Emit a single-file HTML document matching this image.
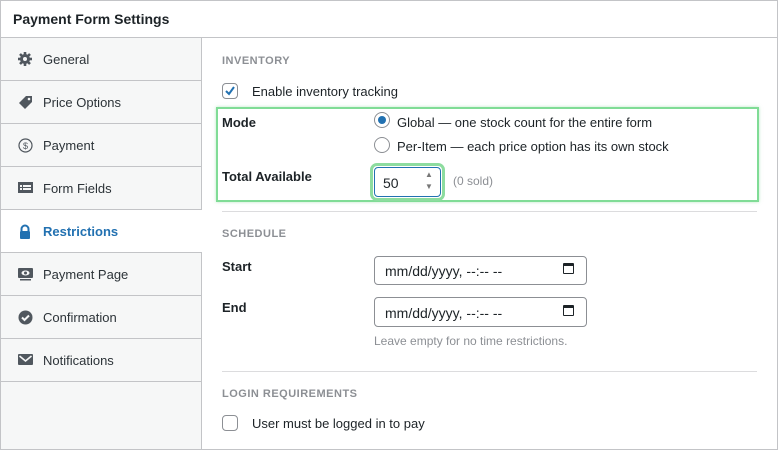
<!DOCTYPE html>
<html><head><style>
*{box-sizing:border-box;margin:0;padding:0}
body{width:778px;height:450px;background:#fff;font-family:"Liberation Sans","DejaVu Sans",sans-serif;color:#1d2327;position:relative;overflow:hidden;font-size:13px}
.a{position:absolute;white-space:nowrap}
.frame{position:absolute;left:0;top:0;width:778px;height:450px;border:1px solid #c3c4c7}
.hdr{position:absolute;left:1px;top:1px;width:776px;height:37px;border-bottom:1px solid #c3c4c7;font-weight:bold;font-size:14px;padding:10px 12px}
.side{position:absolute;left:1px;top:38px;width:201px;height:411px;background:#f6f7f7;border-right:1px solid #c3c4c7}
.it{position:absolute;left:0;width:200px;height:43px;border-bottom:1px solid #c3c4c7;font-size:13px;color:#2c3338}
.it span{position:absolute;left:42px;top:14px}
.it svg{position:absolute;left:17px;top:14px}
.act{background:#fff;width:201px;color:#2271b1;font-weight:bold}
.sec{font-size:11px;font-weight:bold;color:#8c8f94;letter-spacing:.5px}
.lbl{font-weight:bold;font-size:13px}
.cb{position:absolute;width:16px;height:16px;border:1px solid #8c8f94;border-radius:4px;background:#fff}
.rd{position:absolute;width:16px;height:16px;border:1px solid #8c8f94;border-radius:50%;background:#fff}
.inp{position:absolute;border:1px solid #8c8f94;border-radius:4px;background:#fff;font-size:14px}
.line{position:absolute;left:222px;width:535px;height:1px;background:#dcdcde}
</style></head><body>
<div class="frame"></div>
<div class="hdr">Payment Form Settings</div>
<div class="side">
<div class="it" style="top:0"><svg width="14" height="14" viewBox="0 0 14 14"><circle cx="7" cy="7" r="5" fill="#50575e"/><g stroke="#50575e" stroke-width="2.6"><line x1="7" y1="0" x2="7" y2="14"/><line x1="0" y1="7" x2="14" y2="7"/><line x1="2" y1="2" x2="12" y2="12"/><line x1="12" y1="2" x2="2" y2="12"/></g><circle cx="7" cy="7" r="2" fill="#f6f7f7"/></svg><span>General</span></div>
<div class="it" style="top:43px"><svg width="15" height="15" viewBox="0 0 15 15"><path d="M8 1h6v6l-7 7-6-6z" fill="#50575e"/><circle cx="11" cy="4" r="1.3" fill="#f6f7f7"/></svg><span>Price Options</span></div>
<div class="it" style="top:86px"><svg width="15" height="15" viewBox="0 0 15 15"><circle cx="7.5" cy="7.5" r="6.5" fill="none" stroke="#50575e" stroke-width="1.2"/><text x="7.5" y="11" font-size="9" text-anchor="middle" fill="#50575e" font-family="Liberation Sans">$</text></svg><span>Payment</span></div>
<div class="it" style="top:129px"><svg width="15" height="13" viewBox="0 0 15 13"><rect x="0" y="1" width="15" height="11" fill="#50575e"/><rect x="2" y="4" width="2" height="2" fill="#f6f7f7"/><rect x="5" y="4" width="8" height="2" fill="#f6f7f7"/><rect x="2" y="7" width="2" height="2" fill="#f6f7f7"/><rect x="5" y="7" width="8" height="2" fill="#f6f7f7"/></svg><span>Form Fields</span></div>
<div class="it act" style="top:172px"><svg width="14" height="15" viewBox="0 0 14 15"><path d="M3.5 7V5a3.5 3.5 0 0 1 7 0v2" fill="none" stroke="#2271b1" stroke-width="2"/><rect x="2" y="7" width="10" height="8" rx="1" fill="#2271b1"/></svg><span>Restrictions</span></div>
<div class="it" style="top:215px"><svg width="15" height="14" viewBox="0 0 15 14"><rect x="0" y="1" width="15" height="10" rx="1" fill="#50575e"/><ellipse cx="7.5" cy="6" rx="4" ry="2.5" fill="#f6f7f7"/><circle cx="7.5" cy="6" r="1.5" fill="#50575e"/><rect x="2" y="12" width="11" height="1.5" fill="#50575e"/></svg><span>Payment Page</span></div>
<div class="it" style="top:258px"><svg width="15" height="15" viewBox="0 0 15 15"><circle cx="7.5" cy="7.5" r="7" fill="#50575e"/><path d="M4 7.5l2.5 2.5 4.5-4.5" fill="none" stroke="#f6f7f7" stroke-width="2"/></svg><span>Confirmation</span></div>
<div class="it" style="top:301px"><svg width="15" height="13" viewBox="0 0 15 13"><rect x="0" y="1" width="15" height="11" rx="1" fill="#50575e"/><path d="M1.5 3l6 5 6-5" fill="none" stroke="#f6f7f7" stroke-width="1.6"/></svg><span>Notifications</span></div>
</div>

<div class="a sec" style="left:222px;top:55px">INVENTORY</div>
<div class="cb" style="left:222px;top:83px"><svg width="14" height="14" viewBox="0 0 14 14"><path d="M3 7l3 3 5-7" fill="none" stroke="#2271b1" stroke-width="2"/></svg></div>
<div class="a" style="left:252px;top:84px">Enable inventory tracking</div>

<div class="a" style="left:216px;top:107px;width:543px;height:95px;border:2px solid #80dc96;box-shadow:0 0 3px rgba(120,210,140,.5)"></div>
<div class="a lbl" style="left:222px;top:115px">Mode</div>
<div class="rd" style="left:374px;top:112px"><div style="position:absolute;left:3px;top:3px;width:8px;height:8px;border-radius:50%;background:#2271b1"></div></div>
<div class="a" style="left:397px;top:115px">Global — one stock count for the entire form</div>
<div class="rd" style="left:374px;top:137px"></div>
<div class="a" style="left:397px;top:139px">Per-Item — each price option has its own stock</div>
<div class="a lbl" style="left:222px;top:169px">Total Available</div>
<div class="a" style="left:370px;top:163px;width:75px;height:38px;border:3px solid #8ddc9f;border-radius:7px"></div>
<div class="inp" style="left:374px;top:167px;width:67px;height:30px;border-color:#2271b1;padding:7px 8px">50</div>
<div class="a" style="left:425px;top:170px;font-size:8px;color:#777">▲</div>
<div class="a" style="left:425px;top:182px;font-size:8px;color:#777">▼</div>
<div class="a" style="left:453px;top:174px;font-size:12px;color:#8c8f94">(0 sold)</div>

<div class="line" style="top:211px"></div>
<div class="a sec" style="left:222px;top:228px">SCHEDULE</div>
<div class="a lbl" style="left:222px;top:259px">Start</div>
<div class="inp" style="left:374px;top:256px;width:213px;height:29px;padding:6px 10px">mm/dd/yyyy, --:-- --</div>
<div class="a" style="left:563px;top:263px;width:11px;height:11px;border:1.5px solid #1d2327;border-top-width:3px;border-radius:1px"></div>
<div class="a lbl" style="left:222px;top:300px">End</div>
<div class="inp" style="left:374px;top:297px;width:213px;height:30px;padding:7px 10px">mm/dd/yyyy, --:-- --</div>
<div class="a" style="left:563px;top:305px;width:11px;height:11px;border:1.5px solid #1d2327;border-top-width:3px;border-radius:1px"></div>
<div class="a" style="left:374px;top:334px;font-size:12px;color:#8c8f94">Leave empty for no time restrictions.</div>

<div class="line" style="top:371px"></div>
<div class="a sec" style="left:222px;top:388px">LOGIN REQUIREMENTS</div>
<div class="cb" style="left:222px;top:415px"></div>
<div class="a" style="left:252px;top:416px">User must be logged in to pay</div>
</body></html>
